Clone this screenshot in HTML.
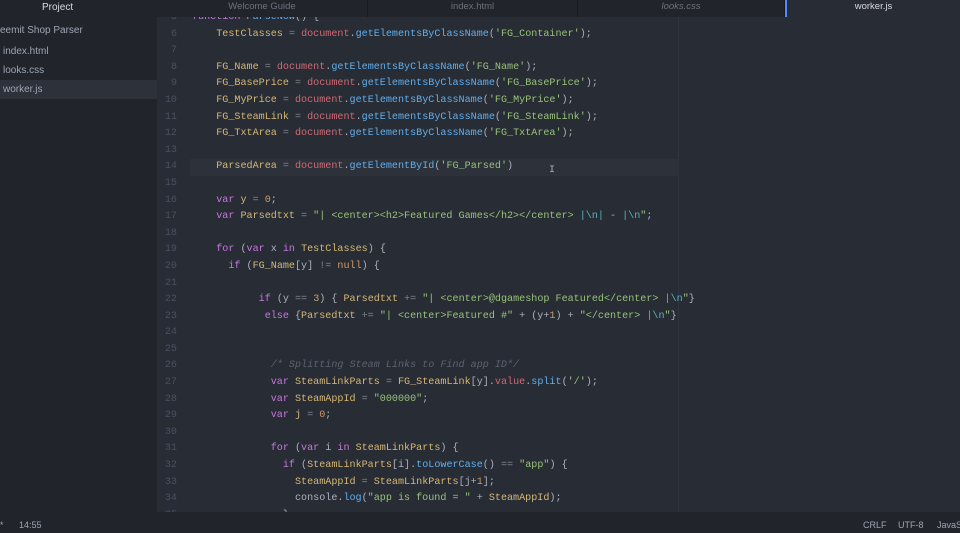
<!DOCTYPE html>
<html><head><meta charset="utf-8"><style>
*{margin:0;padding:0;box-sizing:border-box}
html,body{width:960px;height:533px;overflow:hidden}
body{background:#282c34;font-family:"Liberation Sans",sans-serif;position:relative}
.side{position:absolute;left:0;top:0;width:157px;height:512px;background:#21252b}
.side div{position:absolute;left:3px;font-size:10px;color:#9da5b4}
.tabs{position:absolute;left:157px;top:0;width:803px;height:17px;background:#21252b}
.tab{position:absolute;top:0;height:17px;font-size:9.5px;color:#6b717d;text-align:center;line-height:14px;border-right:1px solid #181a1f}
.ed{position:absolute;left:157px;top:17px;width:803px;height:495px;overflow:hidden;background:#282c34}
.lines{position:absolute;left:0;top:-7px;width:803px}
.l{height:16.6px;line-height:16.6px;font-family:"Liberation Mono",monospace;font-size:10.1px;color:#abb2bf;white-space:pre;position:relative}
.l .n{position:absolute;left:0;width:20px;text-align:right;color:#495162}
.l .c{position:absolute;left:35px}
.v{color:#d7b876}.d{color:#d06a74}.m{color:#61afef}.s{color:#98c379}.k{color:#c678dd}.o{color:#7f8590}.x{color:#56b6c2}.cm{color:#5c6370;font-style:italic}.nm{color:#d19a66}
.status{position:absolute;left:0;top:512px;width:960px;height:21px;background:#21252b;font-size:9px;color:#9da5b4;line-height:27px}
</style></head><body>
<div class="side">
<div style="top:1px;left:42px;color:#d7dae0;font-size:10px;line-height:13px">Project</div>
<div style="top:25px;left:0">eemit Shop Parser</div>
<div style="top:46px">index.html</div>
<div style="top:65px">looks.css</div>
<div style="top:80px;left:0;width:157px;height:19px;background:#2c313a"></div>
<div style="top:84px">worker.js</div>
</div>
<div class="tabs">
<div class="tab" style="left:0;width:211px">Welcome Guide</div>
<div class="tab" style="left:211px;width:210px">index.html</div>
<div class="tab" style="left:421px;width:207px;font-style:italic">looks.css</div>
<div style="position:absolute;left:628px;top:0;width:2px;height:17px;background:#528bff"></div>
<div class="tab" style="left:630px;width:173px;background:#282c34;color:#d7dae0;border:none">worker.js</div>
</div>
<div class="ed">
<div style="position:absolute;left:521px;top:0;width:1px;height:495px;background:#2f343d"></div>
<div class="lines">
<div class="l"><span class="n">5</span><span class="c"><span class="k">function</span> <span class="m">ParseNow</span>() {</span></div>
<div class="l"><span class="n">6</span><span class="c">    <span class="v">TestClasses</span> <span class="o">=</span> <span class="d">document</span>.<span class="m">getElementsByClassName</span>(<span class="s">'FG_Container'</span>);</span></div>
<div class="l"><span class="n">7</span></div>
<div class="l"><span class="n">8</span><span class="c">    <span class="v">FG_Name</span> <span class="o">=</span> <span class="d">document</span>.<span class="m">getElementsByClassName</span>(<span class="s">'FG_Name'</span>);</span></div>
<div class="l"><span class="n">9</span><span class="c">    <span class="v">FG_BasePrice</span> <span class="o">=</span> <span class="d">document</span>.<span class="m">getElementsByClassName</span>(<span class="s">'FG_BasePrice'</span>);</span></div>
<div class="l"><span class="n">10</span><span class="c">    <span class="v">FG_MyPrice</span> <span class="o">=</span> <span class="d">document</span>.<span class="m">getElementsByClassName</span>(<span class="s">'FG_MyPrice'</span>);</span></div>
<div class="l"><span class="n">11</span><span class="c">    <span class="v">FG_SteamLink</span> <span class="o">=</span> <span class="d">document</span>.<span class="m">getElementsByClassName</span>(<span class="s">'FG_SteamLink'</span>);</span></div>
<div class="l"><span class="n">12</span><span class="c">    <span class="v">FG_TxtArea</span> <span class="o">=</span> <span class="d">document</span>.<span class="m">getElementsByClassName</span>(<span class="s">'FG_TxtArea'</span>);</span></div>
<div class="l"><span class="n">13</span></div>
<div class="l"><span class="n">14</span><span style="position:absolute;left:33px;width:489px;height:16.6px;background:#2c313a"></span><span class="c">    <span class="v">ParsedArea</span> <span class="o">=</span> <span class="d">document</span>.<span class="m">getElementById</span>(<span class="s">'FG_Parsed'</span>)</span><span style="position:absolute;left:392px;top:4px;color:#abb2bf">I</span></div>
<div class="l"><span class="n">15</span></div>
<div class="l"><span class="n">16</span><span class="c">    <span class="k">var</span> <span class="v">y</span> <span class="o">=</span> <span class="nm">0</span>;</span></div>
<div class="l"><span class="n">17</span><span class="c">    <span class="k">var</span> <span class="v">Parsedtxt</span> <span class="o">=</span> <span class="s">"| &lt;center&gt;&lt;h2&gt;Featured Games&lt;/h2&gt;&lt;/center&gt; <span class="x">|\n|</span> - <span class="x">|\n</span>"</span>;</span></div>
<div class="l"><span class="n">18</span></div>
<div class="l"><span class="n">19</span><span class="c">    <span class="k">for</span> (<span class="k">var</span> x <span class="k">in</span> <span class="v">TestClasses</span>) {</span></div>
<div class="l"><span class="n">20</span><span class="c">      <span class="k">if</span> (<span class="v">FG_Name</span>[y] <span class="o">!=</span> <span class="nm">null</span>) {</span></div>
<div class="l"><span class="n">21</span></div>
<div class="l"><span class="n">22</span><span class="c">           <span class="k">if</span> (y <span class="o">==</span> <span class="nm">3</span>) { <span class="v">Parsedtxt</span> <span class="o">+=</span> <span class="s">"| &lt;center&gt;@dgameshop Featured&lt;/center&gt; <span class="x">|\n</span>"</span>}</span></div>
<div class="l"><span class="n">23</span><span class="c">            <span class="k">else</span> {<span class="v">Parsedtxt</span> <span class="o">+=</span> <span class="s">"| &lt;center&gt;Featured #"</span> + (y+<span class="nm">1</span>) + <span class="s">"&lt;/center&gt; <span class="x">|\n</span>"</span>}</span></div>
<div class="l"><span class="n">24</span></div>
<div class="l"><span class="n">25</span></div>
<div class="l"><span class="n">26</span><span class="c">             <span class="cm">/* Splitting Steam Links to Find app ID*/</span></span></div>
<div class="l"><span class="n">27</span><span class="c">             <span class="k">var</span> <span class="v">SteamLinkParts</span> <span class="o">=</span> <span class="v">FG_SteamLink</span>[y].<span class="d">value</span>.<span class="m">split</span>(<span class="s">'/'</span>);</span></div>
<div class="l"><span class="n">28</span><span class="c">             <span class="k">var</span> <span class="v">SteamAppId</span> <span class="o">=</span> <span class="s">"000000"</span>;</span></div>
<div class="l"><span class="n">29</span><span class="c">             <span class="k">var</span> <span class="v">j</span> <span class="o">=</span> <span class="nm">0</span>;</span></div>
<div class="l"><span class="n">30</span></div>
<div class="l"><span class="n">31</span><span class="c">             <span class="k">for</span> (<span class="k">var</span> i <span class="k">in</span> <span class="v">SteamLinkParts</span>) {</span></div>
<div class="l"><span class="n">32</span><span class="c">               <span class="k">if</span> (<span class="v">SteamLinkParts</span>[i].<span class="m">toLowerCase</span>() <span class="o">==</span> <span class="s">"app"</span>) {</span></div>
<div class="l"><span class="n">33</span><span class="c">                 <span class="v">SteamAppId</span> <span class="o">=</span> <span class="v">SteamLinkParts</span>[j+<span class="nm">1</span>];</span></div>
<div class="l"><span class="n">34</span><span class="c">                 console.<span class="m">log</span>(<span class="s">"app is found = "</span> + <span class="v">SteamAppId</span>);</span></div>
<div class="l"><span class="n">35</span><span class="c">               }</span></div>
</div>
</div>
<div class="status">
<span style="position:absolute;left:0">*</span>
<span style="position:absolute;left:19px">14:55</span>
<span style="position:absolute;left:863px">CRLF</span>
<span style="position:absolute;left:898px">UTF-8</span>
<span style="position:absolute;left:937px">JavaScript</span>
</div>
</body></html>
